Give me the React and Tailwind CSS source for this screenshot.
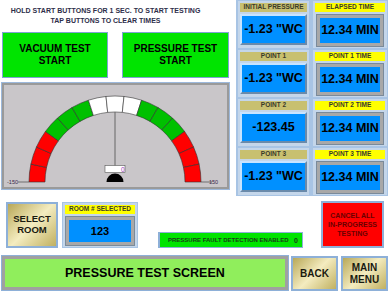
import React from "react";

const FONT = { fontFamily: '"Liberation Sans", Arial, sans-serif' };

const SEGMENTS = [
  "#ff0000", "#ff0000", "#ff0000",
  "#00c000", "#00c000", "#00c000",
  "#ffffff", "#ffffff", "#ffffff",
  "#00c000", "#00c000", "#00c000",
  "#ff0000", "#ff0000", "#ff0000",
];

const CX = 111;
const CY = 97;
const R_OUT = 86;
const R_IN = 70;

const pt = (r, deg) => {
  const a = (deg * Math.PI) / 180;
  return [CX + r * Math.cos(a), CY - r * Math.sin(a)];
};

const segPath = (a0, a1) => {
  const [x0, y0] = pt(R_OUT, a0);
  const [x1, y1] = pt(R_OUT, a1);
  const [x2, y2] = pt(R_IN, a1);
  const [x3, y3] = pt(R_IN, a0);
  return `M${x0},${y0} A${R_OUT},${R_OUT} 0 0 1 ${x1},${y1} L${x2},${y2} A${R_IN},${R_IN} 0 0 0 ${x3},${y3} Z`;
};

const Gauge = () => (
  <div className="w-[229px] h-[108px] ml-[1px] mt-[4px] border border-[#9cb8dc] bg-[#9a9a9a] p-[2px]">
    <svg width="223" height="102" className="block bg-[#c9c6c9]">
      {SEGMENTS.map((c, i) => (
        <path
          key={i}
          d={segPath(180 - i * 12, 180 - (i + 1) * 12)}
          fill={c}
          stroke="#333"
          strokeWidth="0.6"
        />
      ))}
      <line x1="14" y1="97" x2="25" y2="97" stroke="#333" strokeWidth="0.6" />
      <line x1="197" y1="97" x2="208" y2="97" stroke="#333" strokeWidth="0.6" />
      <text x="3" y="99" fontSize="5.5" fill="#3a2a4a" style={FONT}>-150</text>
      <text x="205" y="99" fontSize="5.5" fill="#3a2a4a" style={FONT}>150</text>
      <line x1={CX} y1="27" x2={CX} y2="81" stroke="#666" strokeWidth="1" />
      <rect x="101" y="80.5" width="20" height="7" fill="#fff" stroke="#555" strokeWidth="0.6" />
      <text x="117" y="86.5" fontSize="6.5" fill="#a040c0" style={FONT}>0</text>
      <path d={`M${CX - 8.5},${CY} A8.5,8.5 0 0 1 ${CX + 8.5},${CY} Z`} fill="#000" />
    </svg>
  </div>
);

const ValueCell = ({ title, value, time }) => (
  <div className="h-full border border-[#a8c4e4] bg-[#c4d6ea] p-[2px] flex flex-col">
    <div
      className={`h-[9px] flex items-center justify-center text-[6.5px] font-bold leading-none text-[#3a3a2a] ${
        time ? "bg-[#ffff00]" : "bg-[#c8c070]"
      }`}
    >
      {title}
    </div>
    {time ? (
      <div className="mt-[3px] mx-[2px] h-[31px] border-[3px] border-[#a8a8a8] bg-[#0090ff] outline outline-1 outline-[#7a8a9a] flex items-center justify-center">
        <span className="text-[12.5px] font-bold text-black leading-none">{value}</span>
      </div>
    ) : (
      <div className="mt-[2px] h-[31px] border-[2px] border-t-[#c8e4ff] border-l-[#c8e4ff] border-b-[#6a8aaa] border-r-[#6a8aaa] bg-[#0090ff] flex items-center justify-center">
        <span className="text-[12.5px] font-bold text-black leading-none">{value}</span>
      </div>
    )}
  </div>
);

const goldBtn =
  "border-2 border-[#8eb0d8] bg-[linear-gradient(135deg,#b8a858_0%,#f4ecc0_50%,#c0b060_100%)] flex items-center justify-center text-center font-bold leading-[1.15] text-[#1a1a10]";

const App = () => {
  return (
    <div className="w-[388px] h-[291px] bg-white overflow-hidden flex flex-col" style={FONT}>
      <div className="h-[196px] flex">
        {/* left side */}
        <div className="w-[236px] flex flex-col">
          <div className="w-[211px] pt-[6px] h-[30px] text-center text-[7px] font-bold leading-[10px] text-[#2e2e4a]">
            <div>HOLD START BUTTONS FOR 1 SEC. TO START TESTING</div>
            <div>TAP BUTTONS TO CLEAR TIMES</div>
          </div>
          <div className="flex mt-[2px] pl-[2px] gap-[14px]">
            <div className="w-[106px] h-[46px] border border-[#7ea4d4] bg-[#00e400] flex items-center justify-center text-center text-[10px] font-bold leading-[12px] text-black">
              VACUUM TEST
              <br />
              START
            </div>
            <div className="w-[107px] h-[46px] border border-[#7ea4d4] bg-[#00e400] flex items-center justify-center text-center text-[10px] font-bold leading-[12px] text-black">
              PRESSURE TEST
              <br />
              START
            </div>
          </div>
          <Gauge />
        </div>

        {/* right grid */}
        <div className="flex-1 bg-[#a8c4e4] grid grid-cols-[73px_1fr] grid-rows-4 gap-x-[2px] gap-y-[0px] pl-[1px]">
          <ValueCell title="INITIAL PRESSURE" value={'-1.23 "WC'} />
          <ValueCell title="ELAPSED TIME" value="12.34 MIN" time />
          <ValueCell title="POINT 1" value={'-1.23 "WC'} />
          <ValueCell title="POINT 1 TIME" value="12.34 MIN" time />
          <ValueCell title="POINT 2" value="-123.45" />
          <ValueCell title="POINT 2 TIME" value="12.34 MIN" time />
          <ValueCell title="POINT 3" value={'-1.23 "WC'} />
          <ValueCell title="POINT 3 TIME" value="12.34 MIN" time />
        </div>
      </div>

      {/* middle controls */}
      <div className="h-[60px] flex items-start pl-[6px]">
        <div className={`${goldBtn} w-[52px] h-[46px] mt-[6px] text-[9.5px]`}>
          SELECT
          <br />
          ROOM
        </div>
        <div className="ml-[4px] mt-[6px] w-[76px] h-[46px] border border-[#a8c4e4] bg-[#c4d6ea] p-[2px] flex flex-col">
          <div className="h-[9px] bg-[#ffff00] flex items-center justify-center text-[6.5px] font-bold leading-none text-[#3a3a2a]">
            ROOM # SELECTED
          </div>
          <div className="mt-[3px] mx-[1px] h-[28px] border-[3px] border-[#a8a8a8] bg-[#0090ff] outline outline-1 outline-[#7a8a9a] flex items-center justify-center">
            <span className="text-[11px] font-bold leading-none text-black">123</span>
          </div>
        </div>
        <div className="ml-[20px] mt-[36px] w-[145px] h-[16px] border-l-2 border-[#8eb0d8] border-y border-r bg-[#00e400] flex items-center pl-[8px] pr-[4px]">
          <span className="flex-1 text-[6px] font-bold leading-none text-[#1a3a1a]">
            PRESSURE FAULT DETECTION ENABLED
          </span>
          <span className="text-[7px] font-bold leading-none text-[#1a3a1a]">0</span>
        </div>
        <div className="ml-[18px] mt-[5px] w-[63px] h-[47px] border-2 border-[#8eb0d8] bg-[#ff0000] flex items-center justify-center text-center text-[7px] font-bold leading-[9px] text-[#6a0000]">
          CANCEL ALL
          <br />
          IN-PROGRESS
          <br />
          TESTING
        </div>
      </div>

      {/* bottom bar */}
      <div className="h-[35px] flex pl-[2px] gap-[3px]">
        <div className="w-[286px] h-[34px] border-[3px] border-[#a0a0a0] outline outline-1 outline-[#8eb0d8] bg-[#90ee5c] flex items-center pl-[60px]">
          <span className="text-[12.5px] font-bold leading-none text-black">PRESSURE TEST SCREEN</span>
        </div>
        <div className={`${goldBtn} w-[47px] h-[35px] text-[10px]`}>BACK</div>
        <div className={`${goldBtn} w-[47px] h-[35px] text-[10px]`}>
          MAIN
          <br />
          MENU
        </div>
      </div>
    </div>
  );
};

export default App;
